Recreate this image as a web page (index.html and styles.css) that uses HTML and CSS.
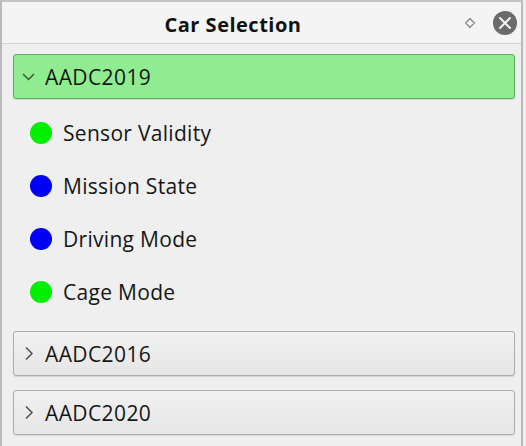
FILE: index.html
```html
<!DOCTYPE html>
<html lang="en">
<head>
    <meta charset="UTF-8">
    <title>Car Selection</title>
    <link rel="stylesheet" href="styles.css">
</head>
<body>
    <div class="dock">
        <div class="title-bar">
            <div class="title">Car Selection</div>
            <div class="title-buttons">
                <svg class="float-btn" width="12" height="12" viewBox="0 0 12 12">
                    <path d="M6 1.5 Q8 4 10.5 6 Q8 8 6 10.5 Q4 8 1.5 6 Q4 4 6 1.5 Z" fill="none" stroke="#8a8a8a" stroke-width="1.3" stroke-linejoin="round"/>
                </svg>
                <svg class="close-btn" width="24" height="24" viewBox="0 0 24 24">
                    <circle cx="12" cy="12" r="12" fill="#6b6b6b"/>
                    <path d="M7 7 L17 17 M17 7 L7 17" stroke="#f2f2f2" stroke-width="2" stroke-linecap="round"/>
                </svg>
            </div>
        </div>

        <div class="content">
            <div class="car-header expanded">
                <svg class="chevron" width="13" height="13" viewBox="0 0 13 13">
                    <polyline points="1,4 6.5,9.5 12,4" fill="none" stroke="#3c5a3c" stroke-width="1.5"/>
                </svg>
                <span>AADC2019</span>
            </div>
            <ul class="status-list">
                <li><span class="dot green"></span>Sensor Validity</li>
                <li><span class="dot blue"></span>Mission State</li>
                <li><span class="dot blue"></span>Driving Mode</li>
                <li><span class="dot green"></span>Cage Mode</li>
            </ul>

            <div class="car-header">
                <svg class="chevron" width="13" height="13" viewBox="0 0 13 13">
                    <polyline points="4,0.5 10,6.5 4,12.5" fill="none" stroke="#505050" stroke-width="1.5"/>
                </svg>
                <span>AADC2016</span>
            </div>
            <div class="car-header">
                <svg class="chevron" width="13" height="13" viewBox="0 0 13 13">
                    <polyline points="4,0.5 10,6.5 4,12.5" fill="none" stroke="#505050" stroke-width="1.5"/>
                </svg>
                <span>AADC2020</span>
            </div>
        </div>
    </div>
</body>
</html>
```

FILE: styles.css
```css
body {
    margin: 0;
    background: #efefef;
    font-family: 'Open Sans', 'Noto Sans', sans-serif;
    color: #161616;
}

.dock {
    width: 523px;
    height: 446px;
    box-sizing: border-box;
    border-top: 2px solid #c2c2c2;
    border-left: 2px solid #bababa;
    border-right: 2px solid #bababa;
    background: #efefef;
}

.title-bar {
    display: flex;
    align-items: center;
    height: 41px;
    background: #f4f4f4;
    border-bottom: 1px solid #d2d2d2;
}

.title {
    flex: 1;
    text-align: center;
    font-weight: bold;
    font-size: 20px;
    letter-spacing: 0.5px;
    padding-top: 4px;
    color: #111;
}

.title-buttons {
    display: flex;
    align-items: center;
    gap: 17px;
    width: 57px;
    padding-top: 1px;
}

.content {
    padding: 10px 6px 0 11px;
}

.car-header {
    display: flex;
    align-items: center;
    gap: 10px;
    height: 43px;
    padding-left: 8px;
    border: 1px solid #adadad;
    border-radius: 3px;
    background: linear-gradient(#f1f1f1, #e6e6e6);
    box-shadow: 0 1px 1px rgba(0,0,0,0.12);
    font-size: 21px;
    letter-spacing: 0.4px;
    margin-bottom: 14px;
}

.car-header.expanded {
    background: #90ec90;
    border-color: #66a866;
    margin-bottom: 0;
}

.status-list {
    list-style: none;
    margin: 0;
    padding: 7px 0 13px 0;
}

.status-list li {
    display: flex;
    align-items: center;
    gap: 11px;
    height: 53px;
    padding-left: 17px;
    font-size: 21px;
    letter-spacing: 0.3px;
}

.dot {
    width: 22px;
    height: 22px;
    border-radius: 50%;
}

.dot.green {
    background: #00f000;
}

.dot.blue {
    background: #0000f5;
}
```
